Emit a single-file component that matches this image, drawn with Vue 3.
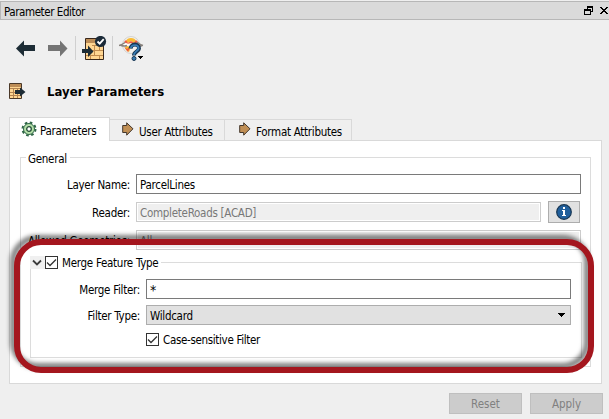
<script setup>
import { ref } from 'vue'

const layerName = ref('ParcelLines')
const mergeFilter = ref('*')
const tabs = ['Parameters', 'User Attributes', 'Format Attributes']
</script>

<template>
  <div class="editor">
    <header class="titlebar">
      <span class="t-title">Parameter Editor</span>
      <svg class="winbtns" width="25" height="9" viewBox="0 0 25 9" shape-rendering="crispEdges">
        <path d="M3 0h6v6H7V5h1V2H4v1H3zM0 3h7v6H0zM1 5v3h5V5z" fill="#000" fill-rule="evenodd" />
        <path d="M16 1h2v1h1v1h2V2h1V1h2v1h-1v1h-1v1h-1v1h1v1h1v1h1v1h-2V7h-1V6h-2v1h-1v1h-2V7h1V6h1V5h1V4h-1V3h-1V2h-1z" fill="#000" />
      </svg>
    </header>

    <nav class="toolbar">
      <svg class="arrow" width="20" height="17" viewBox="0 0 20 17"><path d="M0 8.500 8 .5V5h11v6H8v5.500z" fill="#1d2c35" /></svg>
      <svg class="arrow fwd" width="20" height="17" viewBox="0 0 20 17"><path d="M19.500 8.500 12 .5V5H0v6h12v5.500z" fill="#747474" /></svg>
      <i class="sep"></i>
      <svg class="tool" width="25" height="25" viewBox="0 0 25 25">
        <path d="M3.500 2.500h18v21h-18z" fill="#ffd692" stroke="#38271c" />
        <path d="M4 3h9v4H4z" fill="#bd8d57" />
        <path d="M10 9.500h11M9 14.500h12M4 19.500h17M12.500 9v6M17.500 10v5M12.500 15v5M8.500 20v3M17.500 20v3" fill="none" stroke="#c08a4d" />
        <path d="M0 13h6v-3.500l5.500 6L6 21v-4H0z" fill="#1d2c35" />
        <circle cx="18.500" cy="5.500" r="5.600" fill="#1b2a38" />
        <path d="m15.500 5.500 2.200 2.200 4-4.500" fill="none" stroke="#fff" stroke-width="1.800" />
      </svg>
      <i class="sep second"></i>
      <svg class="help" width="26" height="25" viewBox="0 0 26 25">
        <circle cx="12" cy="9" r="8.500" fill="#f3f1ed" stroke="#d3d3d0" />
        <path d="M7 5q1-3 5-3t5 3l-2 2-3-2-3 2z" fill="#f9bb35" />
        <path d="m5 6 2-2 2 3 3-2 3 2 2-3 2 2-3 2-4-1-4 1z" fill="#ed5b43" />
        <path d="m1 8 6-1 5 2 5-2 6 1-5 2-6-1-6 1z" fill="#fffdf8" />
        <path d="m6 11 2-1 4 1-2 5-3-2z" fill="#f9bb35" />
        <path d="m5 11 3 2 3-2-2 5z" fill="#ed5b43" />
        <path d="M0 9.500Q3 9 6 6.500M2 9.500q4 1 6 0M24 9.500q-3-1-6-3.500M18 9.500q3 1 5 0" fill="none" stroke="#88827c" stroke-width="1.400" />
        <path d="M11.500 12.500C12 7 20.500 7.500 20 12.500c-.4 3.500-5 3-5 7" fill="none" stroke="#173653" stroke-width="4" />
        <path d="M11.700 12.200C12.500 8 20 8 19.500 12.500c-.5 3-4.500 3-4.500 6.500" fill="none" stroke="#397db5" stroke-width="1.800" />
        <circle cx="15" cy="22.500" r="2" fill="#397db5" stroke="#173653" />
        <path d="M19 20h5v1h-1v1h-1v1h-1v-1h-1v-1h-1z" fill="#000" />
      </svg>
    </nav>

    <div class="heading">
      <svg width="17" height="17" viewBox="0 0 17 17">
        <path d="M.5.500h12v15H.500z" fill="#ffd692" stroke="#4a3828" />
        <path d="M1 1h11v3H1z" fill="#bd8d57" />
        <path d="M1 5.500h11M1 9.500h7M1 12.500h11M4.500 5v10M8.500 5v10" fill="none" stroke="#b38350" />
        <path d="M6 7h5V4.500l5.500 4.500L11 13.500V11H6z" fill="#1d2c35" />
      </svg>
      <h1>Layer Parameters</h1>
    </div>

    <div class="tabs">
      <div v-for="(tab, i) in tabs" :key="tab" class="tab" :class="{ active: i === 0, last: i === 2 }">
        <svg v-if="i === 0" width="16" height="16" viewBox="0 0 16 16">
          <circle cx="8" cy="8" r="6.500" fill="none" stroke="#2f6547" stroke-width="2" stroke-dasharray="2.600 2.505" />
          <circle cx="8" cy="8" r="5.500" fill="#b4dfa8" stroke="#2f6547" />
          <circle cx="8" cy="8" r="2.300" fill="#fff" stroke="#244d38" stroke-width="1.300" />
        </svg>
        <svg v-else width="12" height="14" viewBox="0 0 12 14">
          <path d="M.7 3.500h4V.8l6.300 6-6.300 6.400v-2.700h-4z" fill="#c08f55" stroke="#44382d" />
        </svg>
        <span>{{ tab }}</span>
      </div>
    </div>

    <main class="pane">
      <section class="group general">
        <span class="legend">General</span>
        <div class="row">
          <label>Layer Name:</label>
          <div class="field">{{ layerName }}</div>
        </div>
        <div class="row">
          <label>Reader:</label>
          <div class="field disabled">CompleteRoads [ACAD]</div>
          <button class="info">
            <svg width="16" height="16" viewBox="0 0 16 16">
              <circle cx="8" cy="8" r="7.300" fill="#205f9c" stroke="#173653" stroke-width="1.200" />
              <path d="M7 3h2v2H7zM6 6h3v5h1v1H6v-1h1V7H6z" fill="#fff" />
            </svg>
          </button>
        </div>
        <div class="row">
          <label>Allowed Geometries:</label>
          <div class="field disabled">All</div>
        </div>

        <section class="group merge">
          <div class="merge-legend">
            <span class="fold"><svg width="10" height="7" viewBox="0 0 10 7"><path d="m1 1.500 4 4 4-4" fill="none" stroke="#3c3c3c" stroke-width="1.800" /></svg></span>
            <span class="check"><svg width="11" height="11" viewBox="0 0 11 11"><path d="m1 5.500 3 3L10 2.500" fill="none" stroke="#333" stroke-width="1.300" /></svg></span>
            <span class="merge-name">Merge Feature Type</span>
          </div>
          <div class="row">
            <label>Merge Filter:</label>
            <div class="field"><span class="star">{{ mergeFilter }}</span></div>
          </div>
          <div class="row">
            <label>Filter Type:</label>
            <div class="field select">
              <span>Wildcard</span>
              <svg width="7" height="4" viewBox="0 0 7 4" shape-rendering="crispEdges"><path d="M0 0h7v1H6v1H5v1H4v1H3V3H2V2H1V1H0z" /></svg>
            </div>
          </div>
          <div class="case">
            <span class="check"><svg width="11" height="11" viewBox="0 0 11 11"><path d="m1 5.500 3 3L10 2.500" fill="none" stroke="#333" stroke-width="1.300" /></svg></span>
            <span>Case-sensitive Filter</span>
          </div>
        </section>
      </section>
    </main>

    <footer class="actions">
      <button disabled>Reset</button>
      <button disabled>Apply</button>
    </footer>

    <div class="highlight"></div>
  </div>
</template>

<style>
body { margin: 0; background: #efefef; }
</style>

<style scoped>
* { box-sizing: border-box; }
.editor {
  display: flow-root;
  position: relative;
  width: 609px;
  height: 419px;
  overflow: hidden;
  background: #efefef;
  color: #000;
  font: 11.5px/14px "DejaVu Sans Condensed", "DejaVu Sans", sans-serif;
  font-stretch: condensed;
  letter-spacing: -.28px;
  white-space: nowrap;
}
.titlebar {
  display: flex;
  align-items: center;
  justify-content: space-between;
  height: 19px;
  margin-top: 1px;
  padding: 1px 0 0 3px;
  border: 1px solid #b7b7b7;
  border-right: 0;
  background: #dadada;
}
.t-title { margin-top: 2px; letter-spacing: -.42px; }
.winbtns { margin-top: -1px; }
.toolbar { display: flex; height: 25px; margin: 16px 0 0 16px; }
.arrow { margin-top: 4px; }
.fwd { margin-left: 12px; }
.sep { width: 1px; height: 24px; margin-left: 7px; background: #d0d0d0; }
.tool { margin-left: 6px; }
.second { margin-left: 5px; }
.help { margin-left: 6px; }
.heading { display: flex; height: 34px; margin-top: 22px; padding-left: 9px; }
h1 { margin: 0 0 0 21px; font-size: 13px; line-height: 17px; font-weight: 700; letter-spacing: .04px; }
.tabs { display: flex; align-items: flex-end; height: 24px; margin-top: -1px; padding-left: 9px; }
.tab {
  display: flex;
  align-items: center;
  height: 21px;
  width: 115px;
  padding: 0 0 2px 12px;
  border: 1px solid #d9d9d9;
  border-width: 1px 1px 0 0;
}
.tab.last { width: 127px; padding-left: 14px; }
.tab svg { margin-right: 5px; }
.tab span { margin-top: 5px; }
.tab.active {
  position: relative;
  z-index: 1;
  width: 101px;
  height: 24px;
  margin-bottom: -1px;
  border-left-width: 1px;
  padding: 0 0 1px 11px;
  background: #fff;
}
.tab.active svg { margin-right: 3px; }
.tab.active span { margin-top: 3px; }
.pane {
  width: 593px;
  height: 244px;
  margin-left: 9px;
  padding: 16px 10px;
  border: 1px solid #d9d9d9;
  background: #fff;
}
.group { position: relative; border: 1px solid #dcdcdc; }
.general { height: 210px; padding: 16px 9px 0; }
.legend { position: absolute; left: 5px; top: -6px; padding: 0 3px 0 2px; background: #fff; }
.row { display: flex; height: 20px; margin-bottom: 8px; }
.row label { width: 101px; margin-right: 5px; padding: 4px 1px 0 0; display: flex; justify-content: flex-end; }
.field {
  display: flex;
  align-items: center;
  flex: 1;
  height: 20px;
  padding: 2px 3px 0;
  border: 1px solid #7a7a7a;
  background: #fff;
}
.field.disabled { border-color: #ccc; background: #efefef; color: #787878; box-shadow: inset 0 0 0 1px #fff; }
.info {
  display: grid;
  place-items: center;
  width: 32px;
  height: 22px;
  margin: -1px 1px 0 7px;
  padding: 0;
  border: 1px solid #adadad;
  background: #e1e1e1;
}
.merge { width: 552px; height: 96px; margin-top: 12px; padding: 16px 10px 0 0; }
.merge-legend { position: absolute; left: -1px; top: -7px; display: flex; height: 13px; }
.fold { display: grid; place-items: center; width: 15px; height: 13px; background: #f0f0f0; }
.fold svg { margin-left: -2px; }
.check { display: grid; width: 13px; height: 13px; border: 1px solid #333; background: #fff; }
.merge-name { padding: 0 3px 0 4px; background: #fff; }
.merge .row { margin-bottom: 6px; }
.merge .row label { width: 110px; }
.select { justify-content: space-between; padding: 2px 5px 0 3px; border-color: #adadad; background: #e1e1e1; }
.select svg { margin-top: -2px; }
.star { font-size: 14px; padding: 0; }
.case { display: flex; margin: 8px 0 0 115px; gap: 4px; line-height: 14px; letter-spacing: -.33px; }
.actions { display: flex; justify-content: flex-end; gap: 8px; margin-top: 9px; padding-right: 6px; }
.actions button {
  width: 73px;
  height: 21px;
  padding: 1px 0 0;
  border: 1px solid #bfbfbf;
  background: #ccc;
  color: #808080;
  font: inherit;
  letter-spacing: 0;
  line-height: 14px;
}
.highlight {
  position: absolute;
  left: 14px;
  top: 239px;
  width: 580px;
  height: 134px;
  border: 6px solid #a4161e;
  border-radius: 27px;
  filter: drop-shadow(-4px -4px 2px rgba(0, 0, 0, .5));
  pointer-events: none;
}
</style>
